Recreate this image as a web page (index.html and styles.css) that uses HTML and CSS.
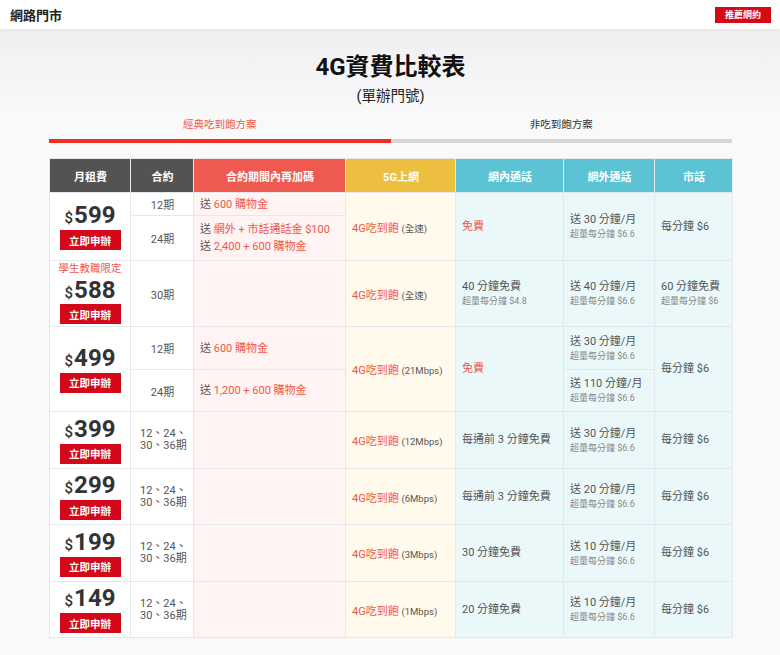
FILE: index.html
```html
<!DOCTYPE html>
<html lang="zh-Hant">
<head>
<meta charset="utf-8">
<title>4G資費比較表</title>
<link rel="stylesheet" href="styles.css">
</head>
<body>
<header class="topbar">
  <div class="brand">網路門市</div>
  <a class="refer-btn" href="#">推薦網約</a>
</header>
<main class="page">
  <h1 class="title">4G資費比較表</h1>
  <div class="subtitle">(單辦門號)</div>
  <nav class="tabs">
    <div class="tab active">經典吃到飽方案</div>
    <div class="tab">非吃到飽方案</div>
  </nav>
  <table class="plans">
    <colgroup>
      <col class="c1"><col class="c2"><col class="c3"><col class="c4"><col class="c5"><col class="c6"><col class="c7">
    </colgroup>
    <thead>
      <tr>
        <th class="h-dark">月租費</th>
        <th class="h-dark">合約</th>
        <th class="h-red">合約期間內再加碼</th>
        <th class="h-yellow">5G上網</th>
        <th class="h-cyan">網內通話</th>
        <th class="h-cyan">網外通話</th>
        <th class="h-cyan">市話</th>
      </tr>
    </thead>
    <tbody>
      <tr class="r1a">
        <td class="price" rowspan="2"><div class="amt"><span class="cur">$</span>599</div><a class="apply" href="#">立即申辦</a></td>
        <td class="term">12期</td>
        <td class="bonus">送 <em>600 購物金</em></td>
        <td class="data" rowspan="2"><em>4G吃到飽</em> <small>(全速)</small></td>
        <td class="onnet" rowspan="2"><em>免費</em></td>
        <td class="offnet" rowspan="2"><div>送 30 分鐘/月</div><small>超量每分鐘 $6.6</small></td>
        <td class="land" rowspan="2">每分鐘 $6</td>
      </tr>
      <tr class="r1b">
        <td class="term">24期</td>
        <td class="bonus"><div>送 <em>網外 + 市話通話金 $100</em></div><div>送 <em>2,400 + 600 購物金</em></div></td>
      </tr>
      <tr class="r2">
        <td class="price"><div class="note">學生教職限定</div><div class="amt amt-tight"><span class="cur">$</span>588</div><a class="apply" href="#">立即申辦</a></td>
        <td class="term">30期</td>
        <td class="bonus"></td>
        <td class="data"><em>4G吃到飽</em> <small>(全速)</small></td>
        <td class="onnet"><div>40 分鐘免費</div><small>超量每分鐘 $4.8</small></td>
        <td class="offnet"><div>送 40 分鐘/月</div><small>超量每分鐘 $6.6</small></td>
        <td class="land"><div>60 分鐘免費</div><small>超量每分鐘 $6</small></td>
      </tr>
      <tr class="r3a">
        <td class="price" rowspan="2"><div class="amt"><span class="cur">$</span>499</div><a class="apply" href="#">立即申辦</a></td>
        <td class="term">12期</td>
        <td class="bonus">送 <em>600 購物金</em></td>
        <td class="data" rowspan="2"><em>4G吃到飽</em> <small>(21Mbps)</small></td>
        <td class="onnet" rowspan="2"><em>免費</em></td>
        <td class="offnet"><div>送 30 分鐘/月</div><small>超量每分鐘 $6.6</small></td>
        <td class="land" rowspan="2">每分鐘 $6</td>
      </tr>
      <tr class="r3b">
        <td class="term">24期</td>
        <td class="bonus">送 <em>1,200 + 600 購物金</em></td>
        <td class="offnet"><div>送 110 分鐘/月</div><small>超量每分鐘 $6.6</small></td>
      </tr>
      <tr class="r4">
        <td class="price"><div class="amt"><span class="cur">$</span>399</div><a class="apply" href="#">立即申辦</a></td>
        <td class="term multi">12、24、<br>30、36期</td>
        <td class="bonus"></td>
        <td class="data"><em>4G吃到飽</em> <small>(12Mbps)</small></td>
        <td class="onnet">每通前 3 分鐘免費</td>
        <td class="offnet"><div>送 30 分鐘/月</div><small>超量每分鐘 $6.6</small></td>
        <td class="land">每分鐘 $6</td>
      </tr>
      <tr class="r5">
        <td class="price"><div class="amt"><span class="cur">$</span>299</div><a class="apply" href="#">立即申辦</a></td>
        <td class="term multi">12、24、<br>30、36期</td>
        <td class="bonus"></td>
        <td class="data"><em>4G吃到飽</em> <small>(6Mbps)</small></td>
        <td class="onnet">每通前 3 分鐘免費</td>
        <td class="offnet"><div>送 20 分鐘/月</div><small>超量每分鐘 $6.6</small></td>
        <td class="land">每分鐘 $6</td>
      </tr>
      <tr class="r6">
        <td class="price"><div class="amt"><span class="cur">$</span>199</div><a class="apply" href="#">立即申辦</a></td>
        <td class="term multi">12、24、<br>30、36期</td>
        <td class="bonus"></td>
        <td class="data"><em>4G吃到飽</em> <small>(3Mbps)</small></td>
        <td class="onnet">30 分鐘免費</td>
        <td class="offnet"><div>送 10 分鐘/月</div><small>超量每分鐘 $6.6</small></td>
        <td class="land">每分鐘 $6</td>
      </tr>
      <tr class="r7">
        <td class="price"><div class="amt"><span class="cur">$</span>149</div><a class="apply" href="#">立即申辦</a></td>
        <td class="term multi">12、24、<br>30、36期</td>
        <td class="bonus"></td>
        <td class="data"><em>4G吃到飽</em> <small>(1Mbps)</small></td>
        <td class="onnet">20 分鐘免費</td>
        <td class="offnet"><div>送 10 分鐘/月</div><small>超量每分鐘 $6.6</small></td>
        <td class="land">每分鐘 $6</td>
      </tr>
    </tbody>
  </table>
</main>
</body>
</html>
```

FILE: styles.css
```css
* { box-sizing: border-box; }
html, body { margin: 0; padding: 0; }
body {
  font-family: "Roboto", "Noto Sans CJK TC", sans-serif;
  color: #444;
  background: linear-gradient(#ebebed 0px, #f3f3f5 60px, #f9f9fa 110px, #f9f9fa 100%);
  min-height: 655px;
}
.topbar {
  height: 29px;
  background: #fff;
  display: flex;
  align-items: center;
  justify-content: space-between;
  padding: 0 9px 0 10px;
  box-shadow: 0 1px 3px rgba(0,0,0,0.06);
  position: relative;
}
.brand {
  font-size: 13px;
  font-weight: 700;
  color: #222;
}
.refer-btn {
  display: flex;
  align-items: center;
  justify-content: center;
  width: 56px;
  height: 16px;
  background: #d50a17;
  color: #fff;
  font-size: 9px;
  font-weight: 700;
  text-decoration: none;
}
.page {
  padding: 0 48px 0 49px;
}
.title {
  margin: 21px 0 0;
  text-align: center;
  font-size: 24px;
  line-height: 34px;
  font-weight: 700;
  color: #111;
}
.subtitle {
  text-align: center;
  font-size: 14.5px;
  line-height: 22px;
  margin-top: 2px;
  color: #222;
}
.tabs {
  display: flex;
  margin-top: 7px;
}
.tab {
  flex: 1;
  text-align: center;
  font-size: 10.5px;
  line-height: 20px;
  padding-bottom: 4px;
  border-bottom: 4px solid #d5d5d5;
  color: #333;
}
.tab.active {
  color: #f0574a;
  border-bottom-color: #ee2e24;
}
.plans {
  margin-top: 15px;
  width: 683px;
  table-layout: fixed;
  border-collapse: collapse;
  font-size: 11px;
}
.c1 { width: 81px; }
.c2 { width: 63px; }
.c3 { width: 152px; }
.c4 { width: 110px; }
.c5 { width: 108px; }
.c6 { width: 91px; }
.c7 { width: 78px; }
.plans th, .plans td {
  border: 1px solid #e4e8ee;
  padding: 0 5px 0 6px;
}
.plans th {
  height: 34px;
  color: #fff;
  font-size: 11px;
  font-weight: 700;
  text-align: center;
}
.h-dark { background: #535353; }
.h-red { background: #ee5950; }
.h-yellow { background: #ecbf40; }
.h-cyan { background: #5bc3d3; }
.r1a td { height: 23px; }
.r1b td { height: 45px; }
.r2 td { height: 66px; }
.r3a td { height: 43px; }
.r3b td { height: 42px; }
.r4 td, .r6 td { height: 57px; }
.r5 td, .r7 td { height: 56px; }
.plans em {
  font-style: normal;
  color: #f0574a;
}
.plans small {
  font-size: 9.5px;
  color: #666;
}
.plans .price {
  background: #fff;
  text-align: center;
  padding: 0;
}
.amt {
  font-size: 24px;
  font-weight: 700;
  line-height: 24px;
  color: #333;
}
.amt-tight {
  line-height: 22px;
  margin-top: 4px;
}
.cur {
  font-size: 15px;
  font-weight: 500;
  margin-right: 1px;
}
.note {
  font-size: 10.5px;
  color: #f0574a;
  line-height: 12px;
}
.apply {
  display: flex;
  align-items: center;
  justify-content: center;
  width: 61px;
  height: 20px;
  margin: 0 auto;
  background: #d3081b;
  color: #fff;
  font-size: 10.5px;
  font-weight: 700;
  text-decoration: none;
}
.term {
  background: #fff;
  text-align: center;
  color: #555;
}
.plans .term.multi {
  text-align: left;
  padding: 0 2px 0 9px;
  line-height: 12px;
}
.bonus {
  background: #fff4f3;
  color: #555;
  line-height: 17px;
}
.data {
  background: #fffaeb;
}
.data small { color: #555; }
.onnet, .offnet, .land {
  background: #ebf8fa;
  color: #555;
  line-height: 16px;
}
.onnet small, .offnet small, .land small {
  display: block;
  font-size: 9px;
  line-height: 13px;
  color: #888;
}
```
